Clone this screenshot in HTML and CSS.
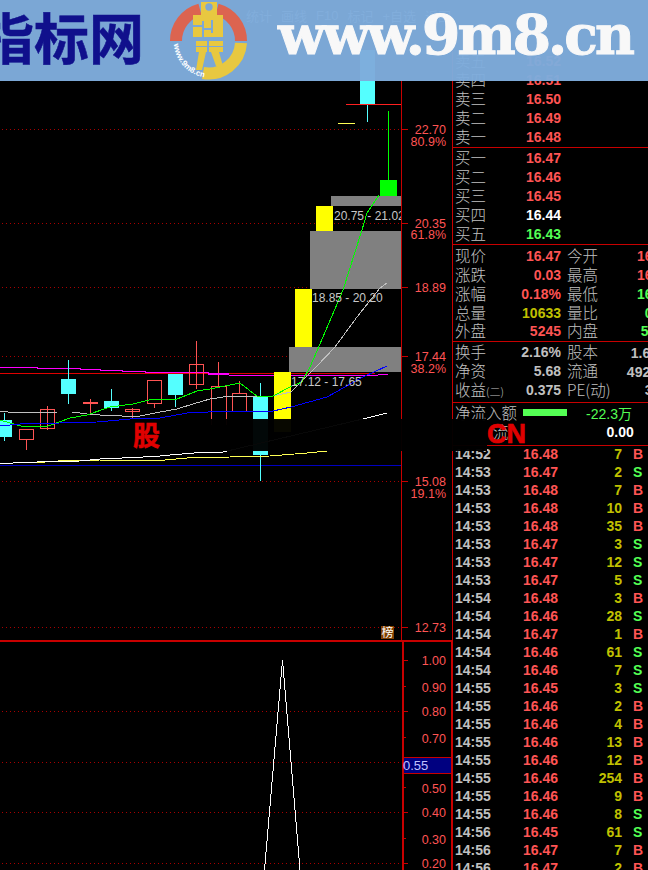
FILE: index.html
```html
<!DOCTYPE html>
<html lang="zh-CN">
<head>
  <meta charset="UTF-8" />
  <title>www.9m8.cn</title>
  <link rel="stylesheet" href="styles.css">
</head>
<body>
  <div class="screen">
    <!-- toolbar sits behind the banner, only just visible -->
    <div class="toolbar">
      <span>统计</span><span>画线</span><span>F10</span><span>标记</span><span>+自选</span><span>返回</span>
    </div>

    <div class="main">
      <!-- Chart: viewBox uses page coordinates -->
      <svg class="chart" width="452" height="846" viewBox="0 24 452 846">
        <defs>
          <clipPath id="plotClip"><rect x="0" y="24" width="401" height="616" /></clipPath>
        </defs>
        <!-- grid -->
        <g class="grid">
          <line x1="2" y1="129.5" x2="402" y2="129.5" />
          <line x1="2" y1="223.5" x2="402" y2="223.5" />
          <line x1="2" y1="287.5" x2="402" y2="287.5" />
          <line x1="2" y1="356.5" x2="402" y2="356.5" />
          <line x1="2" y1="481.5" x2="402" y2="481.5" />
          <line x1="2" y1="627.5" x2="402" y2="627.5" />
          <line x1="2" y1="711.5" x2="402" y2="711.5" />
          <line x1="2" y1="762.5" x2="402" y2="762.5" />
          <line x1="2" y1="812.5" x2="402" y2="812.5" />
          <line x1="2" y1="863.5" x2="402" y2="863.5" />
        </g>

        <!-- flat lines behind the candles -->
        <polyline class="ma-magenta" points="0,367.5 37,367.5 37,368.5 80,368.5 80,369.5 100,369.5 100,370.5 122,370.5 122,371.5 145,371.5 145,372.5 208,372.5 208,374.5 250,375.5 369,375.5 388,374.5" />
        <line class="line-red" x1="0" y1="373.5" x2="375" y2="373.5" />
        <line class="line-navy" x1="0" y1="465.5" x2="402" y2="465.5" />

        <!-- price zones -->
        <rect class="zone" x="331" y="196" width="70" height="10" />
        <rect class="zone" x="310" y="231" width="91" height="58" />
        <rect class="zone" x="289" y="347" width="112" height="25" />
        <rect class="bar-yellow" x="316" y="206" width="17" height="25" />
        <rect class="bar-yellow" x="295" y="289" width="17" height="58" />
        <rect class="bar-yellow" x="274" y="372" width="17" height="60" />

        <!-- candles -->
        <g class="down">
          <path class="wick" d="M4.5 413V441M68.5 360V404M111.5 389V411M175.5 374V407M260.5 383V481M367.5 104V122" />
          <rect x="0" y="420" width="12" height="17" />
          <rect x="61" y="379" width="15" height="15" />
          <rect x="104" y="401" width="15" height="7" />
          <rect x="168" y="374" width="15" height="21" />
          <rect x="253" y="397" width="15" height="58" />
          <rect x="360" y="50" width="15" height="54" />
        </g>
        <g class="up">
          <path d="M26.5 440V450M47.5 406V430M90.5 399V414M132.5 408V418M154.5 404V408M196.5 341V389M218.5 362V387M239.5 381V393" />
          <rect x="19.5" y="429.5" width="14" height="10" />
          <rect x="40.5" y="409.5" width="14" height="19" />
          <rect class="solid" x="83" y="402" width="15" height="2" />
          <rect x="125.5" y="409.5" width="14" height="2" />
          <rect x="147.5" y="380.5" width="14" height="23" />
          <rect x="189.5" y="364.5" width="14" height="20" />
          <path d="M211.5 425V386.5H226.5V425" />
          <rect x="232.5" y="393.5" width="14" height="18" />
        </g>
        <rect class="cross-magenta" x="208" y="373" width="21" height="2" />
        <line class="line-bright" x1="346" y1="104.5" x2="402" y2="104.5" />
        <line class="tick-yellow" x1="338" y1="123.5" x2="355" y2="123.5" />
        <rect class="bar-green" x="380" y="180" width="17" height="16" />
        <line class="wick-green" x1="388.5" y1="111" x2="388.5" y2="180" />

        <!-- averages -->
        <polyline class="ma-grey" points="0,411.5 16,412.5 58,412 72,412 87,414 100,415 122,416 140,416 160,412 177,409 193,404 210,399 230,396 258,397 273,396 291,392 317,366 335,347 357,317 380,288 387,283" />
        <polyline class="ma-green" points="0,420 17,425 25,427 48,426 70,418 87,415 110,407 133,404 153,399 177,399 197,391 210,389 230,385 240,383 258,397 273,396 292,386 302,382 310,367 323,337 343,290 362,230 367,213 379,195" />
        <polyline class="ma-blue" points="0,426 20,424 60,423 97,422 130,419 160,418 187,413 230,411 273,411 291,407 327,397 363,377 387,366" />
        <polyline class="ma-yellow" points="0,463.5 13,463 37,462.7 58,461 100,460 165,460 187,458 230,457 270,456 307,453 327,451" />
        <polyline class="ma-white" points="0,464 13,463 37,462 80,461 100,459 122,458 143,457 160,456 170,455 182,454 207,452 223,452 367,418 387,413" />

        <!-- zone labels -->
        <g class="zone-labels" clip-path="url(#plotClip)">
          <text x="334" y="220">20.75 - 21.02</text>
          <text x="312" y="302">18.85 - 20.20</text>
          <text x="291" y="386">17.12 - 17.65</text>
        </g>

        <!-- lower pane -->
        <polyline class="signal" points="264.5,870 282.5,660 300,870" />

        <!-- axis -->
        <g class="axis">
          <line x1="401.5" y1="80" x2="401.5" y2="640" />
          <path d="M402 129.5H408M402 223.5H408M402 287.5H408M402 356.5H408M402 481.5H408M402 627.5H408M402 660.5H408M402 686.5H406M402 711.5H408M402 737.5H406M402 762.5H408M402 787.5H406M402 812.5H408M402 838.5H406M402 863.5H408" />
        </g>
        <rect class="axis-solid" x="402" y="640" width="2" height="230" />
        <rect class="axis-solid" x="0" y="640" width="452" height="2" />
        <rect class="axis-solid" x="451" y="640" width="1" height="230" />

        <g class="axis-labels">
          <text x="446" y="134">22.70</text>
          <text x="446" y="146">80.9%</text>
          <text x="446" y="228">20.35</text>
          <text x="446" y="239">61.8%</text>
          <text x="446" y="292">18.89</text>
          <text x="446" y="361">17.44</text>
          <text x="446" y="373">38.2%</text>
          <text x="446" y="486">15.08</text>
          <text x="446" y="498">19.1%</text>
          <text x="446" y="632">12.73</text>
          <text x="446" y="665">1.00</text>
          <text x="446" y="692">0.90</text>
          <text x="446" y="716">0.80</text>
          <text x="446" y="743">0.70</text>
          <text x="446" y="793">0.50</text>
          <text x="446" y="817">0.40</text>
          <text x="446" y="844">0.30</text>
          <text x="446" y="868">0.20</text>
        </g>
        <rect class="cursor-tag" x="403.5" y="757.5" width="48" height="16" />
        <text class="cursor-text" x="403" y="770">0.55</text>
        <rect class="rank-badge" x="381" y="626" width="13" height="13" />
        <text class="rank-text" x="381.5" y="637">榜</text>
      </svg>

      <!-- Right panel -->
      <div class="panel">
        <div class="block block-sell">
          <div class="pair"><span class="label">卖五</span><b class="red">16.52</b></div>
          <div class="pair"><span class="label">卖四</span><b class="red">16.51</b></div>
          <div class="pair"><span class="label">卖三</span><b class="red">16.50</b></div>
          <div class="pair"><span class="label">卖二</span><b class="red">16.49</b></div>
          <div class="pair"><span class="label">卖一</span><b class="red">16.48</b></div>
        </div>
        <div class="block block-buy">
          <div class="pair"><span class="label">买一</span><b class="red">16.47</b></div>
          <div class="pair"><span class="label">买二</span><b class="red">16.46</b></div>
          <div class="pair"><span class="label">买三</span><b class="red">16.45</b></div>
          <div class="pair"><span class="label">买四</span><b class="white">16.44</b></div>
          <div class="pair"><span class="label">买五</span><b class="green">16.43</b></div>
        </div>
        <div class="block block-quote">
          <div class="two">
            <div class="pair"><span class="label">现价</span><b class="red">16.47</b></div>
            <div class="pair"><span class="label">今开</span><b class="red">16.10</b></div>
          </div>
          <div class="two">
            <div class="pair"><span class="label">涨跌</span><b class="red">0.03</b></div>
            <div class="pair"><span class="label">最高</span><b class="red">16.55</b></div>
          </div>
          <div class="two">
            <div class="pair"><span class="label">涨幅</span><b class="red">0.18%</b></div>
            <div class="pair"><span class="label">最低</span><b class="green">16.08</b></div>
          </div>
          <div class="two">
            <div class="pair"><span class="label">总量</span><b class="olive">10633</b></div>
            <div class="pair"><span class="label">量比</span><b class="green">0.88</b></div>
          </div>
          <div class="two">
            <div class="pair"><span class="label">外盘</span><b class="red">5245</b></div>
            <div class="pair"><span class="label">内盘</span><b class="green">5388</b></div>
          </div>
        </div>
        <div class="block block-stats">
          <div class="two">
            <div class="pair"><span class="label">换手</span><b>2.16%</b></div>
            <div class="pair"><span class="label">股本</span><b>1.64亿</b></div>
          </div>
          <div class="two">
            <div class="pair"><span class="label">净资</span><b>5.68</b></div>
            <div class="pair"><span class="label">流通</span><b>4928万</b></div>
          </div>
          <div class="two">
            <div class="pair"><span class="label">收益<small class="label-small">(二)</small></span><b>0.375</b></div>
            <div class="pair"><span class="label">PE(动)</span><b>32.9</b></div>
          </div>
        </div>
        <div class="block block-flow">
          <div class="flow-row">
            <span class="label">净流入额</span>
            <i class="flow-bar"></i>
            <span class="flow-value">-22.3万</span>
          </div>
          <div class="flow-row">
            <span class="label flow-hidden">流</span>
            <b class="flow-zero">0.00</b>
          </div>
        </div>
        <div class="trades">
          <div class="trade"><b>14:52</b><b class="red">16.48</b><b class="vol">7</b><b class="side red">B</b></div>
          <div class="trade"><b>14:53</b><b class="red">16.47</b><b class="vol">2</b><b class="side green">S</b></div>
          <div class="trade"><b>14:53</b><b class="red">16.48</b><b class="vol">7</b><b class="side red">B</b></div>
          <div class="trade"><b>14:53</b><b class="red">16.48</b><b class="vol">10</b><b class="side red">B</b></div>
          <div class="trade"><b>14:53</b><b class="red">16.48</b><b class="vol">35</b><b class="side red">B</b></div>
          <div class="trade"><b>14:53</b><b class="red">16.47</b><b class="vol">3</b><b class="side green">S</b></div>
          <div class="trade"><b>14:53</b><b class="red">16.47</b><b class="vol">12</b><b class="side green">S</b></div>
          <div class="trade"><b>14:53</b><b class="red">16.47</b><b class="vol">5</b><b class="side green">S</b></div>
          <div class="trade"><b>14:54</b><b class="red">16.48</b><b class="vol">3</b><b class="side red">B</b></div>
          <div class="trade"><b>14:54</b><b class="red">16.46</b><b class="vol">28</b><b class="side green">S</b></div>
          <div class="trade"><b>14:54</b><b class="red">16.47</b><b class="vol">1</b><b class="side red">B</b></div>
          <div class="trade"><b>14:54</b><b class="red">16.46</b><b class="vol">61</b><b class="side green">S</b></div>
          <div class="trade"><b>14:54</b><b class="red">16.46</b><b class="vol">7</b><b class="side green">S</b></div>
          <div class="trade"><b>14:55</b><b class="red">16.45</b><b class="vol">3</b><b class="side green">S</b></div>
          <div class="trade"><b>14:55</b><b class="red">16.46</b><b class="vol">2</b><b class="side red">B</b></div>
          <div class="trade"><b>14:55</b><b class="red">16.46</b><b class="vol">4</b><b class="side red">B</b></div>
          <div class="trade"><b>14:55</b><b class="red">16.46</b><b class="vol">13</b><b class="side red">B</b></div>
          <div class="trade"><b>14:55</b><b class="red">16.46</b><b class="vol">12</b><b class="side red">B</b></div>
          <div class="trade"><b>14:55</b><b class="red">16.46</b><b class="vol">254</b><b class="side red">B</b></div>
          <div class="trade"><b>14:55</b><b class="red">16.46</b><b class="vol">9</b><b class="side red">B</b></div>
          <div class="trade"><b>14:55</b><b class="red">16.46</b><b class="vol">8</b><b class="side green">S</b></div>
          <div class="trade"><b>14:56</b><b class="red">16.45</b><b class="vol">61</b><b class="side green">S</b></div>
          <div class="trade"><b>14:56</b><b class="red">16.47</b><b class="vol">7</b><b class="side red">B</b></div>
          <div class="trade"><b>14:56</b><b class="red">16.47</b><b class="vol">2</b><b class="side red">B</b></div>
        </div>
      </div>
    </div>

    <!-- Watermark strip across the chart -->
    <div class="watermark">
      <span class="mark-text">股</span>
      <span class="mark-block"></span>
      <span class="mark-text mark-latin">CN</span>
    </div>

    <!-- Site banner over the top -->
    <div class="banner">
      <span class="banner-title">指标网</span>
      <svg class="banner-logo" width="80" height="81" viewBox="168 0 80 81">
        <path class="logo-red" d="M176 41A32.5 32.5 0 0 1 200 9.5" />
        <path class="logo-red" d="M217 9.5A32.5 32.5 0 0 1 241 41" />
        <path class="logo-gold" d="M241 43A32.5 32.5 0 0 1 203 73" />
        <path id="logoTextArc" class="logo-none" d="M174 44A36 36 0 0 0 203 77" />
        <text class="logo-url"><textPath href="#logoTextArc">www.9m8.cn</textPath></text>
        <g class="logo-fill">
          <path fill-rule="evenodd" d="M201 2H217V15H223V37H193V15H201ZM212.7 7A3.7 3.7 0 1 0 205.3 7A3.7 3.7 0 1 0 212.7 7Z" />
          <rect x="196" y="41" width="27" height="11" />
          <path d="M199 52H206L202 70H196ZM211 52H219L223 66H216Z" />
        </g>
        <g class="logo-cut">
          <rect x="193" y="25" width="9" height="2" />
          <rect x="202" y="21" width="2" height="16" />
          <rect x="211" y="20" width="2" height="13" />
          <rect x="204" y="28" width="7" height="2" />
          <rect x="196" y="46" width="27" height="1" />
          <rect x="207" y="41" width="2" height="11" />
        </g>
      </svg>
      <span class="banner-url">www.9m8.cn</span>
    </div>
  </div>
</body>
</html>
```

FILE: styles.css
```css
* {
  margin: 0;
  padding: 0;
  box-sizing: border-box;
}
html, body {
  width: 648px;
  height: 870px;
  overflow: hidden;
  background: #000;
}
body {
  font-family: "Liberation Sans", "Noto Sans CJK SC", sans-serif;
  color: #c0c0c0;
}
.screen {
  position: relative;
  width: 648px;
  height: 870px;
  overflow: hidden;
}

/* Toolbar */
.toolbar {
  height: 24px;
  display: flex;
  align-items: center;
  gap: 9px;
  padding: 6px 0 0 246px;
  font-size: 13px;
}

.main {
  display: flex;
  height: 846px;
}

/* Chart */
.chart {
  display: block;
  flex: none;
  width: 452px;
  height: 846px;
  shape-rendering: crispEdges;
}
.grid line {
  stroke: #a80000;
  stroke-width: 1;
  stroke-dasharray: 1 3;
}
.axis line, .axis path {
  stroke: #c80000;
  stroke-width: 1;
  fill: none;
}
.axis-solid { fill: #c80000; }
.axis-labels text {
  font-size: 12.5px;
  fill: #ff5454;
  text-anchor: end;
}
.zone { fill: #808080; }
.bar-yellow { fill: #ffff00; }
.bar-green { fill: #00ff00; }
.wick-green { stroke: #00ff00; }
.down rect { fill: #54ffff; }
.down .wick { stroke: #54ffff; fill: none; }
.up path, .up rect {
  stroke: #ff5454;
  fill: none;
}
.up .solid { fill: #ff5454; stroke: none; }
.cross-magenta { fill: #ff00ff; }
.line-red { stroke: #e00000; }
.line-bright { stroke: #ff2020; }
.line-navy { stroke: #0000c0; }
.tick-yellow { stroke: #ffff54; }
.ma-magenta, .ma-grey, .ma-green, .ma-blue, .ma-yellow, .ma-white, .signal {
  fill: none;
  stroke-width: 1;
}
.ma-magenta { stroke: #ff00ff; }
.ma-grey { stroke: #c0c0c0; }
.ma-green { stroke: #00ff00; }
.ma-blue { stroke: #0000ff; }
.ma-yellow { stroke: #ffff54; }
.ma-white { stroke: #ffffff; }
.signal { stroke: #ffffff; }
.zone-labels text {
  font-size: 12px;
  fill: #c8c8c8;
}
.cursor-tag {
  fill: #000080;
  stroke: #c80000;
}
.cursor-text {
  font-size: 13px;
  fill: #c0c0ff;
}
.rank-badge { fill: #804000; }
.rank-text {
  font-family: "Noto Sans CJK SC", sans-serif;
  font-size: 12px;
  fill: #fff;
}

/* Right panel */
.panel {
  flex: none;
  width: 196px;
  height: 846px;
  overflow: hidden;
  border-left: 1px solid #c80000;
  padding-left: 2px;
  font-size: 14px;
}
.block {
  border-bottom: 1px solid #c80000;
  margin-left: -3px;
  padding-left: 3px;
  width: 197px;
}
.block-sell { padding-top: 27px; padding-bottom: 1px; }
.block-buy { padding-bottom: 1px; }
.block-quote { padding-top: 2px; height: 97px; }
.block-stats { padding-top: 1px; height: 61px; }
.block-flow { height: 43px; }

.pair {
  width: 106px;
  height: 19px;
  display: flex;
  justify-content: space-between;
  align-items: center;
  white-space: nowrap;
  flex: none;
}
.two {
  display: flex;
  gap: 6px;
  height: 18.75px;
  width: 220px;
}
.two .pair { height: 18.75px; }
.two .pair + .pair { width: 105px; }
.label {
  font-family: "Noto Sans CJK SC", sans-serif;
  font-size: 15.5px;
  font-weight: 300;
  color: #c0c0c0;
  margin-top: -2px;
}
.label-small { font-size: 11px; }
.red { color: #ff5454; }
.green { color: #54ff54; }
.white { color: #fff; }
.olive { color: #c0c000; }

/* Net inflow rows */
.flow-row {
  height: 19px;
  display: flex;
  align-items: center;
  white-space: nowrap;
}
.flow-bar {
  width: 44px;
  height: 7px;
  margin-left: 6px;
  background: #54ff54;
}
.flow-value {
  margin-left: 19px;
  color: #54ff54;
}
.flow-hidden { margin-left: 38px; }
.flow-zero {
  margin-left: 98px;
  color: #fff;
}

/* Trade ticks */
.trades {
  font-size: 14px;
  margin-top: -1px;
}
.trade {
  height: 18px;
  display: grid;
  grid-template-columns: 68px 36px 63px 20px;
  align-items: center;
}
.trade b:first-child { color: #c0c0c0; }
.vol {
  color: #c0c000;
  text-align: right;
}
.side { padding-left: 11px; }

/* Watermark */
.watermark {
  position: absolute;
  left: 133px;
  top: 419px;
  display: flex;
  height: 32px;
  align-items: center;
}
.mark-text {
  font-family: "Noto Sans CJK SC", "Liberation Sans", sans-serif;
  font-size: 27px;
  font-weight: 700;
  line-height: 32px;
  color: #e00000;
  -webkit-text-stroke: 0.6px #e00000;
}
.mark-latin {
  font-family: "Liberation Sans", sans-serif;
  margin-top: -2px;
}
.mark-block {
  width: 327px;
  height: 32px;
  background: rgba(0, 0, 0, 0.97);
}

/* Banner */
.banner {
  position: absolute;
  left: 0;
  top: 0;
  width: 648px;
  height: 81px;
  overflow: hidden;
  background: rgba(127, 172, 220, 0.97);
}
.banner-title {
  position: absolute;
  left: -21px;
  top: -3px;
  font-family: "Noto Sans CJK SC", sans-serif;
  font-size: 55px;
  line-height: 76px;
  font-weight: 700;
  color: #10108c;
  -webkit-text-stroke: 0.5px #10108c;
  white-space: nowrap;
}
.banner-logo {
  position: absolute;
  left: 168px;
  top: 0;
}
.logo-red, .logo-gold {
  fill: none;
  stroke-width: 12;
}
.logo-red { stroke: #dc6450; }
.logo-gold { stroke: #e8c840; }
.logo-none { fill: none; }
.logo-fill { fill: #e8c840; }
.logo-cut { fill: #7ca8d6; }
.logo-url {
  font-size: 8px;
  font-weight: 700;
  fill: #fff;
}
.banner-url {
  position: absolute;
  left: 278px;
  top: 2px;
  font-family: "DejaVu Serif", serif;
  font-size: 55px;
  line-height: 66px;
  font-weight: 700;
  letter-spacing: -2.9px;
  color: #f8f8f8;
  -webkit-text-stroke: 1px #f8f8f8;
  white-space: nowrap;
}
```
